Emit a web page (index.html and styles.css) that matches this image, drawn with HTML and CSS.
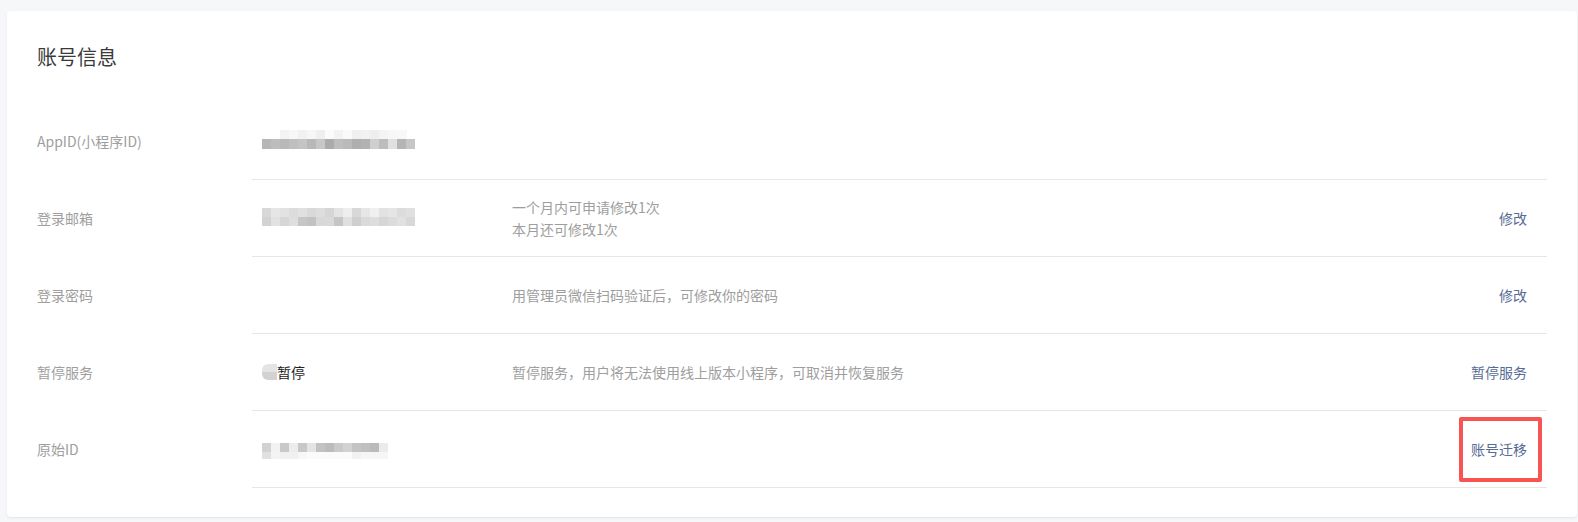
FILE: index.html
```html
<!DOCTYPE html>
<html lang="zh-CN">
<head>
<meta charset="utf-8">
<title>账号信息</title>
<link rel="stylesheet" href="styles.css">
</head>
<body>
<div class="page">
  <section class="card">
    <h2 class="title">账号信息</h2>
    <div class="row">
      <div class="label">AppID(小程序ID)</div>
      <div class="content">
        <div class="value"><span class="mosaic mosaic-appid"></span></div>
        <div class="desc"></div>
        <div class="action"></div>
      </div>
    </div>
    <div class="row">
      <div class="label">登录邮箱</div>
      <div class="content">
        <div class="value"><span class="mosaic mosaic-email"></span></div>
        <div class="desc">一个月内可申请修改1次<br>本月还可修改1次</div>
        <div class="action"><a class="link" href="#">修改</a></div>
      </div>
    </div>
    <div class="row">
      <div class="label">登录密码</div>
      <div class="content">
        <div class="value"></div>
        <div class="desc">用管理员微信扫码验证后，可修改你的密码</div>
        <div class="action"><a class="link" href="#">修改</a></div>
      </div>
    </div>
    <div class="row">
      <div class="label">暂停服务</div>
      <div class="content">
        <div class="value"><span class="mosaic mosaic-status"></span><span class="value-text">暂停</span></div>
        <div class="desc">暂停服务，用户将无法使用线上版本小程序，可取消并恢复服务</div>
        <div class="action"><a class="link" href="#">暂停服务</a></div>
      </div>
    </div>
    <div class="row">
      <div class="label">原始ID</div>
      <div class="content">
        <div class="value"><span class="mosaic mosaic-origin"></span></div>
        <div class="desc"></div>
        <div class="action"><a class="link link-marked" href="#">账号迁移</a></div>
      </div>
    </div>
  </section>
</div>
</body>
</html>
```

FILE: styles.css
```css
* { box-sizing: border-box; }

html, body {
  margin: 0;
  padding: 0;
  background: #f6f7f9;
}

body {
  font-family: "Noto Sans CJK SC", "Noto Sans", sans-serif;
  color: #353535;
  font-size: 14px;
}

.page {
  padding: 11px 1px 5px 7px;
}

.card {
  background: #ffffff;
  border-radius: 4px;
  box-shadow: 0 1px 2px rgba(0, 0, 0, 0.08);
  padding: 32px 30px 28px 30px;
  height: 506px;
}

.title {
  margin: 0 0 32px 0;
  font-size: 20px;
  font-weight: normal;
  line-height: 28px;
  color: #3a3a3a;
}

.row {
  display: flex;
  height: 77px;
}

.label {
  width: 215px;
  flex: none;
  display: flex;
  align-items: center;
  color: #9e9e9e;
  line-height: 20px;
  padding-bottom: 1px;
}

.content {
  flex: 1;
  display: flex;
  align-items: center;
  border-bottom: 1px solid #e7e7eb;
}

.value {
  width: 260px;
  flex: none;
  padding-left: 10px;
  display: flex;
  align-items: center;
  color: #353535;
  line-height: 20px;
}

.value-text {
  color: #222;
}

.desc {
  flex: 1;
  color: #9e9e9e;
  line-height: 22px;
}

.action {
  padding-right: 20px;
  line-height: 20px;
}

.link {
  color: #576b95;
  text-decoration: none;
}

.link-marked {
  position: relative;
  display: inline-block;
}

.link-marked::after {
  content: "";
  position: absolute;
  left: -12px;
  right: -15px;
  top: -22px;
  bottom: -23px;
  border: 4px solid #f75454;
  border-radius: 2px;
}

/* pixelated (blurred) private values */
.mosaic {
  display: block;
  flex: none;
}

.mosaic-appid {
  width: 153px;
  height: 19px;
  margin-top: -4px;
  background:
    linear-gradient(to right,
      transparent 0 18px,
      #f3f3f3 18px 27px, #f7f7f7 27px 36px, #f1f1f1 36px 45px, #f6f6f6 45px 54px,
      #efefef 54px 63px, #fbfbfb 63px 72px, #f3f3f3 72px 81px, #fafafa 81px 90px,
      #f0f0f0 90px 99px, #f2f2f2 99px 108px, #eeeeee 108px 117px, #f4f4f4 117px 126px,
      #f7f7f7 126px 135px, #f8f8f8 135px 145px, transparent 145px) top / 100% 9px no-repeat,
    linear-gradient(to right,
      #b6b6b6 0 9px, #bdbdbd 9px 18px, #b9b9b9 18px 27px, #bfbfbf 27px 36px,
      #c4c4c4 36px 45px, #b8b8b8 45px 54px, #c7c7c7 54px 63px, #ababab 63px 72px,
      #bebebe 72px 81px, #bababa 81px 90px, #afafaf 90px 99px, #b2b2b2 99px 108px,
      #cfcfcf 108px 117px, #bdbdbd 117px 126px, #e0e0e0 126px 135px, #b5b5b5 135px 144px,
      #c6c6c6 144px 153px) bottom / 100% 10px no-repeat;
}

.mosaic-email {
  width: 153px;
  height: 18px;
  margin-top: -2px;
  background:
    linear-gradient(to right,
      #d8d8d8 0 9px, #e6e6e6 9px 18px, #e2e2e2 18px 27px, #dcdcdc 27px 36px,
      #e0e0e0 36px 45px, #d9d9d9 45px 54px, #dddddd 54px 63px, #d6d6d6 63px 72px,
      #e4e4e4 72px 81px, #eeeeee 81px 90px, #d8d8d8 90px 99px, #e6e6e6 99px 108px,
      #f0f0f0 108px 117px, #e2e2e2 117px 126px, #e5e5e5 126px 135px, #dcdcdc 135px 144px,
      #e0e0e0 144px 153px) top / 100% 9px no-repeat,
    linear-gradient(to right,
      #d2d2d2 0 9px, #e2e2e2 9px 18px, #d6d6d6 18px 27px, #dedede 27px 36px,
      #c6c6c6 36px 45px, #c2c2c2 45px 54px, #d8d8d8 54px 63px, #d9d9d9 63px 72px,
      #c6c6c6 72px 81px, #e0e0e0 81px 90px, #cfcfcf 90px 99px, #dadada 99px 108px,
      #dddddd 108px 117px, #d6d6d6 117px 126px, #dcdcdc 126px 135px, #e1e1e1 135px 144px,
      #d8d8d8 144px 153px) bottom / 100% 9px no-repeat;
}

.mosaic-status {
  width: 15px;
  height: 16px;
  border-radius: 6px 0 0 6px;
  background:
    linear-gradient(#e4e4e4 0 8px, #d2d2d2 8px 16px);
}

.mosaic-origin {
  width: 126px;
  height: 16px;
  margin-top: 3px;
  background:
    linear-gradient(to right,
      #d2d2d2 0 9px, #f2f2f2 9px 18px, #c8c8c8 18px 27px, #ececec 27px 36px,
      #c8c8c8 36px 45px, #e4e4e4 45px 54px, #c2c2c2 54px 63px, #bcbcbc 63px 72px,
      #cacaca 72px 81px, #d2d2d2 81px 90px, #c4c4c4 90px 99px, #c0c0c0 99px 108px,
      #bababa 108px 117px, #ebebeb 117px 126px) top / 100% 9px no-repeat,
    linear-gradient(to right,
      #e0e0e0 0 9px, #f3f3f3 9px 18px, #f0f0f0 18px 36px, #f7f7f7 36px 45px,
      #fbfbfb 45px 90px, #f2f2f2 90px 99px, #f6f6f6 99px 126px) bottom / 100% 7px no-repeat;
}
```
